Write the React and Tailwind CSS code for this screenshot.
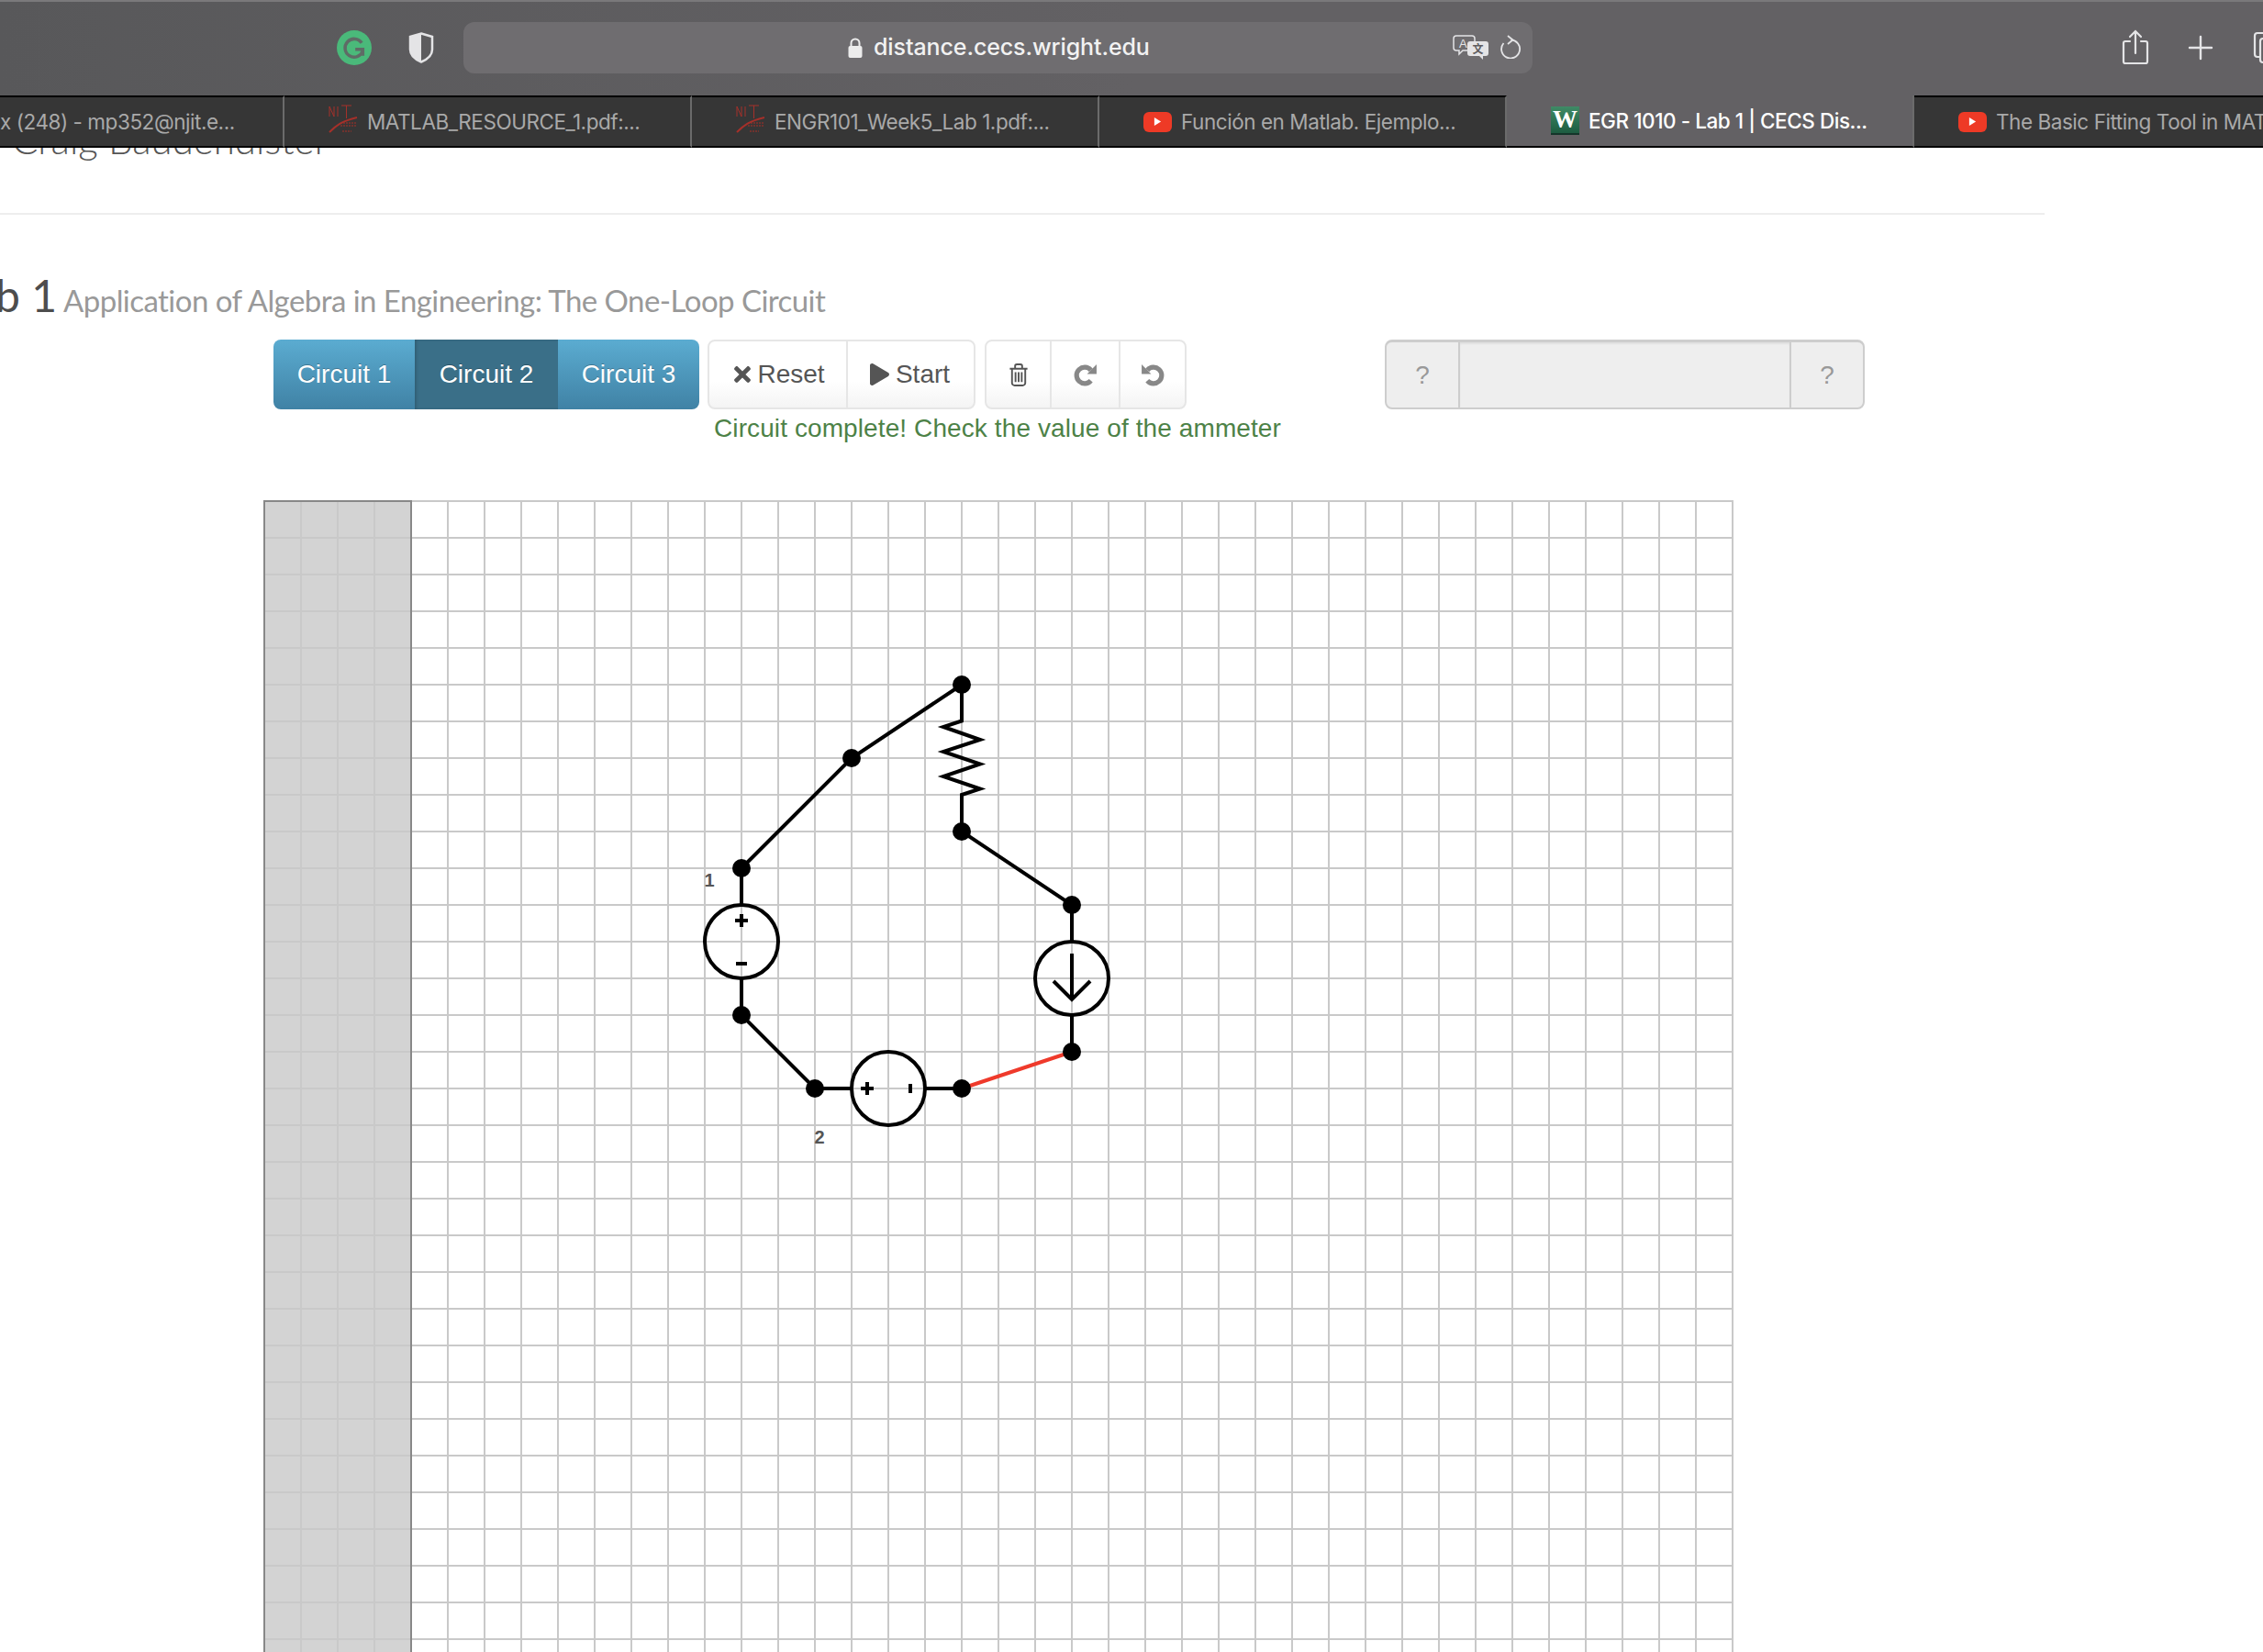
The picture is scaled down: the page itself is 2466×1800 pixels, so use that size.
import { FaPlay, FaTimes } from 'react-icons/fa';

const TABS = [
  { title: 'x (248) - mp352@njit.e...', icon: null, width: 'w-[310px]', pad: 'pl-0' },
  { title: 'MATLAB_RESOURCE_1.pdf:...', icon: 'njit' },
  { title: 'ENGR101_Week5_Lab 1.pdf:...', icon: 'njit' },
  { title: 'Función en Matlab. Ejemplo...', icon: 'yt' },
  { title: 'EGR 1010 - Lab 1 | CECS Dis...', icon: 'w', active: true },
  { title: 'The Basic Fitting Tool in MATLAB', icon: 'yt', last: true },
];

function NjitIcon() {
  return (
    <svg viewBox="0 0 32 40" className="w-[32px] h-[40px] shrink-0">
      <g stroke="#a5302a" strokeWidth="1" fill="none">
        <path d="M1 14V3l5 11V3M10 3v11M14 2h11M19.500 2v14" />
        <path d="M1 31C8 24 14 19 31 15" strokeWidth="2" />
        <path d="M13 21h17M13 24h17M15 30h10" strokeWidth="1.500" strokeDasharray="2 1" opacity="0.700" />
      </g>
    </svg>
  );
}

function YoutubeIcon() {
  return (
    <div className="w-[31px] h-[22px] shrink-0 rounded-[6px] bg-[#ee3a26] flex items-center justify-center">
      <svg viewBox="0 0 10 12" className="w-[9px] h-[11px]">
        <path d="M1 1l8 5-8 5z" fill="#fff" />
      </svg>
    </div>
  );
}

function WrightIcon() {
  return (
    <div className="w-[31px] h-[31px] shrink-0 bg-gradient-to-b from-[#3f8b66] to-[#1d5c41] border-b-2 border-[#14352a] flex items-center justify-center font-['Liberation_Serif',serif] font-bold text-[27px] leading-none text-white">
      W
    </div>
  );
}

function Tab({ tab }) {
  const bg = tab.active ? 'bg-[#636164] text-white font-medium border-t-0' : 'bg-[#363636] text-[#a9a9a9] border-t-2 border-t-black';
  return (
    <div className={`${tab.width || 'w-[444px]'} ${tab.last ? 'grow min-w-0' : 'shrink-0 border-r-2 border-r-[#6b6b6b]'} ${tab.pad || 'pl-[48px]'} ${bg} h-full border-b-2 border-b-black flex items-center gap-[10px] overflow-hidden`}>
      {tab.icon === 'njit' && <NjitIcon />}
      {tab.icon === 'yt' && <YoutubeIcon />}
      {tab.icon === 'w' && <WrightIcon />}
      <span className="whitespace-nowrap text-[22.500px] tracking-[-0.45px]">{tab.title}</span>
    </div>
  );
}

function BrowserChrome() {
  return (
    <div className="relative z-10 font-['Inter',sans-serif]">
      {/* Toolbar */}
      <div className="h-[104px] border-t-2 border-t-[#7a797b] bg-gradient-to-r from-[#58585a] via-[#636164] via-50% to-[#636164] flex items-center pl-[367px] pb-[2px]">
        <div className="w-[38px] h-[38px] rounded-full bg-[#4ab97a] flex items-center justify-center shrink-0">
          <svg viewBox="0 0 24 24" className="w-[28px] h-[28px]" fill="none" stroke="#5f6b66" strokeWidth="3">
            <path d="M19 7.500A8.500 8.500 0 1 0 20 15M13 13.500h7v6" />
          </svg>
        </div>
        <svg viewBox="0 0 28 34" className="w-[28px] h-[34px] ml-[40px] shrink-0">
          <path d="M14 1.500 26 5v14c0 7-6 11-12 13.500C8 30 2 26 2 19V5z" fill="none" stroke="#e4e4e6" strokeWidth="2.500" />
          <path d="M14 1.500 2 5v14c0 7 6 11 12 13.500z" fill="#e4e4e6" />
        </svg>
        <div className="w-[1165px] h-[56px] ml-[32px] rounded-[12px] bg-[#6f6d70] flex items-center shrink-0 pl-[419px] pr-[12px]">
          <svg viewBox="0 0 16 22" className="w-[16px] h-[22px] shrink-0">
            <path d="M3.500 10V6a4.500 4.500 0 0 1 9 0v4" fill="none" stroke="#ececec" strokeWidth="2" />
            <rect x="0.500" y="9" width="15" height="13" rx="2" fill="#ececec" />
          </svg>
          <span className="ml-[12px] text-[25px] font-medium text-[#f2f2f2] tracking-[-0.1px] whitespace-nowrap">distance.cecs.wright.edu</span>
          <svg viewBox="0 0 40 28" className="w-[40px] h-[28px] ml-auto mr-[12px] -mt-[2px] shrink-0">
            <path d="M4 2h17a3 3 0 0 1 3 3v10a3 3 0 0 1-3 3H11l-4 4v-4H4a3 3 0 0 1-3-3V5a3 3 0 0 1 3-3z" fill="#6f6d70" stroke="#e4e4e6" strokeWidth="1.500" />
            <text x="7" y="15" fontSize="13" fill="#e4e4e6" fontFamily="Liberation Sans, sans-serif">A</text>
            <path d="M19 8h17a3 3 0 0 1 3 3v10a3 3 0 0 1-3 3h-3v4l-4-4H19a3 3 0 0 1-3-3V11a3 3 0 0 1 3-3z" fill="#e4e4e6" />
            <text x="21.500" y="21" fontSize="12" fontWeight="bold" fill="#5f5d60" fontFamily="Noto Sans CJK SC, sans-serif">文</text>
          </svg>
          <svg viewBox="0 0 22 26" className="w-[22px] h-[26px] mr-[1px] -mt-[3px] shrink-0" fill="none" stroke="#e4e4e6" strokeWidth="1.800">
            <path d="M11.500 5.500A10 10 0 1 1 3.500 9" />
            <path d="M8 1l5.500 4.500L8 10" />
          </svg>
        </div>
        <svg viewBox="0 0 30 40" className="w-[30px] h-[40px] ml-[642px] shrink-0" fill="none" stroke="#e4e4e6" strokeWidth="2.200" strokeLinecap="round">
          <path d="M9 13H4a2 2 0 0 0-2 2v20a2 2 0 0 0 2 2h22a2 2 0 0 0 2-2V15a2 2 0 0 0-2-2h-5M15 26V2M9 8l6-6 6 6" />
        </svg>
        <svg viewBox="0 0 28 28" className="w-[28px] h-[28px] ml-[42px] shrink-0" stroke="#e4e4e6" strokeWidth="2.400" strokeLinecap="round">
          <path d="M14 2v24M2 14h24" />
        </svg>
        <svg viewBox="0 0 24 40" className="w-[24px] h-[40px] ml-[43px] shrink-0" fill="none" stroke="#e4e4e6" strokeWidth="2.200">
          <rect x="2" y="4" width="18" height="26" rx="3" />
          <rect x="8" y="10" width="18" height="26" rx="3" fill="#636164" />
        </svg>
      </div>
      {/* Tab bar */}
      <div className="h-[57px] flex w-[2466px]">
        {TABS.map((tab) => <Tab key={tab.title} tab={tab} />)}
      </div>
    </div>
  );
}

function RedoIcon({ flip }) {
  return (
    <svg viewBox="0 0 26 26" className={`w-[27px] h-[27px] ${flip ? '-scale-x-100' : ''}`}>
      <path d="M19 8A8.500 8.500 0 1 0 19 19" fill="none" stroke="#888" strokeWidth="5" />
      <path d="M25 2V12H15z" fill="#888" />
    </svg>
  );
}

function Toolbar() {
  const groupBtn = "h-full flex items-center justify-center";
  const plainGroup = "h-[76px] flex rounded-[8px] border-2 border-[#e6e6e6] bg-gradient-to-b from-white from-60% to-[#f4f4f4] text-[#555] text-[28px] shrink-0";
  return (
    <div className="flex pl-[298px] h-[76px]">
      <div className="w-[464px] h-full flex rounded-[8px] overflow-hidden text-white text-[28px] shrink-0 [text-shadow:0_-1px_0_rgba(0,0,0,0.25)]">
        <div className={`${groupBtn} w-[154px] bg-gradient-to-b from-[#5bacd1] to-[#4082a5]`}>Circuit 1</div>
        <div className={`${groupBtn} w-[156px] bg-[#3a6f88] shadow-[inset_2px_0_3px_rgba(0,0,0,0.15)]`}>Circuit 2</div>
        <div className={`${groupBtn} w-[154px] bg-gradient-to-b from-[#5bacd1] to-[#4082a5]`}>Circuit 3</div>
      </div>
      <div className={`${plainGroup} w-[292px] ml-[9px]`}>
        <div className={`${groupBtn} w-[151px] gap-[3px] border-r-2 border-[#e6e6e6]`}>
          <FaTimes className="w-[26px] h-[26px]" />
          <span>Reset</span>
        </div>
        <div className={`${groupBtn} grow gap-[7px] pr-[2px]`}>
          <FaPlay className="w-[21px] h-[24px]" />
          <span>Start</span>
        </div>
      </div>
      <div className={`${plainGroup} w-[220px] ml-[10px] text-[#888]`}>
        <div className={`${groupBtn} w-[71px] border-r-2 border-[#e6e6e6]`}>
          <svg viewBox="0 0 22 26" className="w-[22px] h-[25px]" fill="none" stroke="#555" strokeWidth="2">
            <path d="M1 6h20M7 6V3a2 2 0 0 1 2-2h4a2 2 0 0 1 2 2v3M3.500 6v16a3 3 0 0 0 3 3h9a3 3 0 0 0 3-3V6M7.500 10v11M11 10v11M14.500 10v11" />
          </svg>
        </div>
        <div className={`${groupBtn} w-[75px] border-r-2 border-[#e6e6e6]`}>
          <RedoIcon />
        </div>
        <div className={`${groupBtn} grow`}>
          <RedoIcon flip />
        </div>
      </div>
      <div className="w-[523px] h-[76px] ml-[216px] flex rounded-[8px] border-2 border-t-[3px] border-[#cdcdcd] bg-[#eeeeee] text-[#999] text-[28px] shrink-0">
        <div className={`${groupBtn} w-[80px] border-r-2 border-[#cdcdcd]`}>?</div>
        <div className="grow shadow-[inset_0_2px_2px_rgba(0,0,0,0.06)]" />
        <div className={`${groupBtn} w-[80px] border-l-2 border-[#cdcdcd]`}>?</div>
      </div>
    </div>
  );
}

function Node({ x, y }) {
  return <circle cx={x} cy={y} r="10" fill="#000" />;
}

function CircuitCanvas() {
  return (
    // viewBox is in page pixels, so the numbers below read straight off the screenshot
    <svg viewBox="280 540 1612 1260" className="block w-[1612px] ml-[280px] mt-[50px] h-[1260px]">
      <defs>
        <pattern id="grid" x="287" y="545" width="40" height="40" patternUnits="userSpaceOnUse">
          <path d="M0 1H40M1 0V40" stroke="#c9c9c9" strokeWidth="2" fill="none" />
        </pattern>
      </defs>
      <rect x="288" y="546" width="160" height="1254" fill="#d3d3d3" />
      <rect x="287" y="545" width="1602" height="1255" fill="url(#grid)" />
      <rect x="288" y="546" width="160" height="1260" fill="none" stroke="#888" strokeWidth="2" />

      <g fill="none" stroke="#000" strokeWidth="4">
        <path d="M808 946L928 826L1048 746V785.500L1028 792L1068 806L1028 819L1068 832.500L1028 846L1068 859.500L1048 866V906L1168 986V1026" />
        <circle cx="1168" cy="1066" r="40" />
        <path d="M1168 1039V1088M1148 1069L1168 1089L1188 1069M1168 1106V1146" />
        <path d="M1048 1186H1008" />
        <circle cx="968" cy="1186" r="40" />
        <path d="M928 1186H888L808 1106V1066" />
        <circle cx="808" cy="1026" r="40" />
        <path d="M808 986V946" />
        {/* source polarity marks */}
        <path d="M801 1003H815M808 996V1010M802 1050H814M938 1186H952M945 1179V1193M992 1181V1191" />
      </g>
      <path d="M1048 1186L1168 1146" stroke="#ef3a2b" strokeWidth="4" />

      {[[1048, 746], [928, 826], [808, 946], [808, 1106], [888, 1186], [1048, 1186], [1168, 1146], [1168, 986], [1048, 906]].map(([x, y]) => (
        <Node key={`${x}-${y}`} x={x} y={y} />
      ))}

      <g fill="#555" fontSize="20" fontWeight="bold" fontFamily="Liberation Sans, sans-serif" textAnchor="middle">
        <text x="773" y="966">1</text>
        <text x="893" y="1246">2</text>
      </g>
    </svg>
  );
}

export default function App() {
  return (
    <div className="w-[2466px] h-[1800px] overflow-hidden bg-white font-['Liberation_Sans',Arial,sans-serif]">
      <BrowserChrome />
      <main>
        <div className="-mt-[33px] pl-[13px] h-[104px] font-['Lato',sans-serif] font-light text-[42px] leading-[48px] text-[#555] whitespace-nowrap">
          Craig Baudendistel
        </div>
        <div className="h-[2px] w-[2228px] bg-[#eeeeee]" />
        <h1 className="-ml-[5px] mt-[53px] h-[83px] flex items-baseline font-['Lato',sans-serif] text-[48px] leading-[70px] text-[#4d4d4d] whitespace-nowrap">
          <span>b 1</span>
          <span className="ml-[7px] text-[33px] tracking-[-0.55px] text-[#999]">Application of Algebra in Engineering: The One-Loop Circuit</span>
        </h1>
        <Toolbar />
        <p className="ml-[778px] mt-[3px] h-[41px] text-[28px] tracking-[0.1px] leading-[36px] text-[#4d8247] whitespace-nowrap">
          Circuit complete! Check the value of the ammeter
        </p>
      </main>
      <CircuitCanvas />
    </div>
  );
}
